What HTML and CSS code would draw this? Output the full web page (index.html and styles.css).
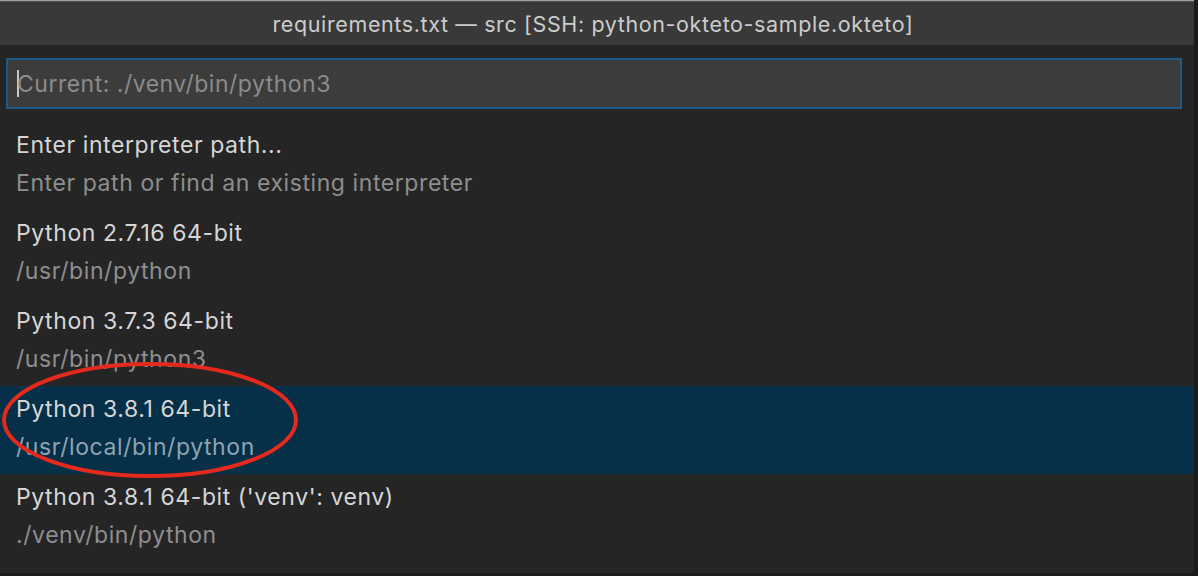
FILE: index.html
```html
<!DOCTYPE html>
<html>
<head>
<meta charset="utf-8">
<link rel="stylesheet" href="styles.css">
</head>
<body>
<div class="window">
  <div class="titlebar">requirements.txt — src [SSH: python-okteto-sample.okteto]</div>
  <div class="panel">
    <div class="input-wrap">
      <div class="input"><span class="caret"></span><span class="placeholder">Current: ./venv/bin/python3</span></div>
    </div>
    <div class="list">
      <div class="row">
        <div class="label">Enter interpreter path...</div>
        <div class="desc">Enter path or find an existing interpreter</div>
      </div>
      <div class="row">
        <div class="label">Python 2.7.16 64-bit</div>
        <div class="desc">/usr/bin/python</div>
      </div>
      <div class="row">
        <div class="label">Python 3.7.3 64-bit</div>
        <div class="desc">/usr/bin/python3</div>
      </div>
      <div class="row selected">
        <div class="label">Python 3.8.1 64-bit</div>
        <div class="desc">/usr/local/bin/python</div>
      </div>
      <div class="row">
        <div class="label">Python 3.8.1 64-bit ('venv': venv)</div>
        <div class="desc">./venv/bin/python</div>
      </div>
    </div>
  </div>
</div>
<svg class="annotation" width="310" height="130" viewBox="0 0 310 130">
  <ellipse cx="150" cy="62" rx="146" ry="56" fill="none" stroke="#e42a1c" stroke-width="4"/>
</svg>
</body>
</html>
```

FILE: styles.css
```css
html, body {
  margin: 0;
  padding: 0;
  background: #1b1b1b;
  width: 1198px;
  height: 576px;
  overflow: hidden;
  font-family: "Inter", "Noto Sans", sans-serif;
}
.window {
  width: 1194px;
  height: 573px;
  display: flex;
  flex-direction: column;
}
.titlebar {
  border-top: 1px solid #a0a0a0;
  box-shadow: inset 0 1px 0 #505050;
  background: #393939;
  color: #cccccc;
  font-size: 21.5px;
  letter-spacing: 0.62px;
  display: flex;
  align-items: center;
  justify-content: center;
  padding-top: 2px;
  padding-right: 8px;
  box-sizing: border-box;
  height: 45px;
}
.panel {
  flex: 1;
  background: #252526;
  display: flex;
  flex-direction: column;
}
.input-wrap {
  padding: 13px 12px 0 6px;
}
.input {
  height: 51px;
  box-sizing: border-box;
  border: 2px solid #1d5a88;
  background: #3c3c3c;
  display: flex;
  align-items: center;
  padding-left: 9px;
  font-size: 23px;
  letter-spacing: 0.5px;
}
.caret {
  width: 2px;
  height: 27px;
  background: #c8c8c8;
  margin-right: -2px;
}
.placeholder {
  color: #8b8b8b;
}
.list {
  margin-top: 13px;
  display: flex;
  flex-direction: column;
}
.row {
  height: 88px;
  box-sizing: border-box;
  padding: 4px 16px 8px 16px;
  font-size: 23px;
  letter-spacing: 0.58px;
}
.row.selected {
  background: #062f48;
}
.label {
  line-height: 38px;
  color: #d6d6d6;
}
.desc {
  line-height: 38px;
  color: #8e8e8e;
}
.selected .desc {
  color: #8fa3b3;
}
.annotation {
  position: absolute;
  left: 0;
  top: 358px;
}
```
